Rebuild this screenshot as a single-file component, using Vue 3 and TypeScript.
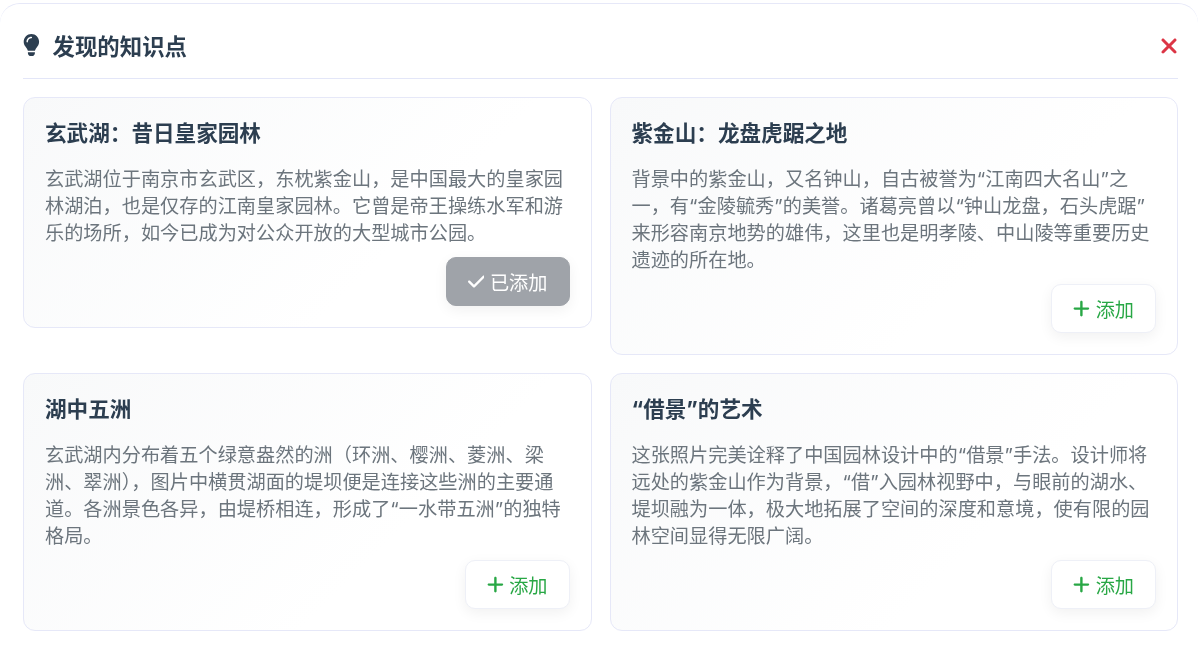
<script setup lang="ts">
interface Item { title: string; text: string; added: boolean }
const items: Item[] = [
  { title: '玄武湖\uFF1A昔日皇家园林', text: '玄武湖位于南京市玄武区\uFF0C东枕紫金山\uFF0C是中国最大的皇家园林湖泊\uFF0C也是仅存的江南皇家园林。它曾是帝王操练水军和游乐的场所\uFF0C如今已成为对公众开放的大型城市公园。', added: true },
  { title: '紫金山\uFF1A龙盘虎踞之地', text: '背景中的紫金山\uFF0C又名钟山\uFF0C自古被誉为“江南四大名山”之一\uFF0C有“金陵毓秀”的美誉。诸葛亮曾以“钟山龙盘\uFF0C石头虎踞”来形容南京地势的雄伟\uFF0C这里也是明孝陵、中山陵等重要历史遗迹的所在地。', added: false },
  { title: '湖中五洲', text: '玄武湖内分布着五个绿意盎然的洲\uFF08环洲、樱洲、菱洲、梁洲、翠洲\uFF09\uFF0C图片中横贯湖面的堤坝便是连接这些洲的主要通道。各洲景色各异\uFF0C由堤桥相连\uFF0C形成了“一水带五洲”的独特格局。', added: false },
  { title: '“借景”的艺术', text: '这张照片完美诠释了中国园林设计中的“借景”手法。设计师将远处的紫金山作为背景\uFF0C“借”入园林视野中\uFF0C与眼前的湖水、堤坝融为一体\uFF0C极大地拓展了空间的深度和意境\uFF0C使有限的园林空间显得无限广阔。', added: false },
]
</script>

<template>
  <div class="panel" lang="zh-CN">
    <header class="head">
      <h2 class="heading">
        <svg class="bulb" viewBox="0 0 384 512" aria-hidden="true"><path d="M272 384c9.600-31.900 29.500-59.100 49.200-86.200c5.200-7.100 10.400-14.200 15.400-21.400c19.800-28.500 31.400-63 31.400-100.300C368 78.800 289.200 0 192 0S16 78.800 16 176c0 37.300 11.600 71.900 31.400 100.300c5 7.200 10.200 14.300 15.400 21.400c19.800 27.100 39.700 54.400 49.200 86.300H272zM192 512c44.200 0 80-35.800 80-80V416H112v16c0 44.200 35.800 80 80 80zM112 176c0 8.800-7.200 16-16 16s-16-7.200-16-16c0-61.900 50.100-112 112-112c8.800 0 16 7.200 16 16s-7.200 16-16 16c-44.200 0-80 35.800-80 80z"/></svg>
        发现的知识点
      </h2>
      <button class="close" aria-label="关闭">
        <svg viewBox="0 0 384 512"><path d="M342.600 150.600c12.500-12.500 12.500-32.800 0-45.300s-32.800-12.500-45.300 0L192 210.700 86.600 105.400c-12.500-12.500-32.800-12.500-45.300 0s-12.500 32.800 0 45.300L146.700 256 41.400 361.400c-12.500 12.500-12.500 32.800 0 45.300s32.800 12.500 45.300 0L192 301.300 297.400 406.600c12.500 12.500 32.800 12.500 45.300 0s12.500-32.800 0-45.300L237.300 256 342.600 150.600z" /></svg>
      </button>
    </header>
    <div class="grid">
      <article v-for="item in items" :key="item.title" class="card">
        <h3 class="card-title">{{ item.title }}</h3>
        <p class="card-text">{{ item.text }}</p>
        <div class="actions">
          <button class="btn" :class="{ added: item.added }">
            <svg v-if="item.added" class="ico" viewBox="0 0 448 512"><path d="M438.600 105.400c12.500 12.500 12.500 32.800 0 45.300l-256 256c-12.500 12.500-32.800 12.500-45.300 0l-128-128c-12.500-12.500-12.500-32.800 0-45.300s32.800-12.500 45.300 0L160 338.700 393.400 105.400c12.500-12.500 32.800-12.500 45.300 0z" /></svg>
            <svg v-else class="ico" viewBox="0 0 448 512"><path d="M256 80c0-17.700-14.300-32-32-32s-32 14.300-32 32V224H48c-17.700 0-32 14.300-32 32s14.300 32 32 32H192V432c0 17.700 14.300 32 32 32s32-14.300 32-32V288H400c17.700 0 32-14.300 32-32s-14.300-32-32-32H256V80z" /></svg>
            {{ item.added ? '已添加' : '添加' }}
          </button>
        </div>
      </article>
    </div>
  </div>
</template>

<style>
html, body { margin: 0; background: #fff; }
</style>

<style scoped>
.panel {
  box-sizing: border-box;
  width: 1198px;
  height: 649px;
  margin-top: 3px;
  padding: 0 20px 0 23px;
  background: #fff;
  border-top: 1px solid #e6e8f8;
  border-radius: 20px 20px 0 0;
  font-family: Inter, "Noto Sans CJK SC", sans-serif;
  overflow: hidden;
  will-change: transform;
}
.head {
  display: flex;
  align-items: center;
  justify-content: space-between;
  box-sizing: border-box;
  height: 75px;
  padding-top: 8px;
  border-bottom: 1px solid #e3e6f8;
}
.heading {
  display: flex;
  align-items: center;
  gap: 12.800px;
  margin: 0;
  font-size: 22.400px;
  font-weight: 700;
  color: #2c3e50;
}
.bulb { width: 16.800px; height: 22.400px; fill: #2c3e50; }
.close {
  display: flex;
  padding: 0;
  margin-top: 2px;
  border: 0;
  background: none;
}
.close svg { width: 18px; height: 24px; fill: #dc3545; }
.grid {
  display: grid;
  grid-template-columns: 1fr 1fr;
  gap: 18px;
  align-items: start;
  padding-top: 18px;
}
.card {
  box-sizing: border-box;
  padding: 21px 21px;
  border: 1px solid #e6e8f8;
  border-radius: 12px;
  background: linear-gradient(135deg, #f8f9fa, #fff 65%);
}
.card-title {
  margin: 0 0 19px;
  font-size: 21.600px;
  line-height: 28px;
  font-weight: 700;
  color: #2c3e50;
}
.card-text {
  margin: 0 0 10.850px;
  font-size: 19.200px;
  line-height: 1.400;
  color: #6c757d;
}
.actions { display: flex; justify-content: flex-end; }
.btn {
  display: flex;
  align-items: center;
  gap: 5.600px;
  height: 48.800px;
  padding: 0 21px;
  border: 1px solid #eef0f7;
  border-radius: 10px;
  background: #fff;
  color: #28a745;
  font: inherit;
  font-size: 19.200px;
  box-shadow: 0 4px 14px rgba(0, 0, 0, 0.06);
}
.btn.added { background: #9fa3a9; border-color: #9fa3a9; color: #fff; }
.ico { width: 16.800px; height: 19.200px; fill: currentColor; }
</style>
